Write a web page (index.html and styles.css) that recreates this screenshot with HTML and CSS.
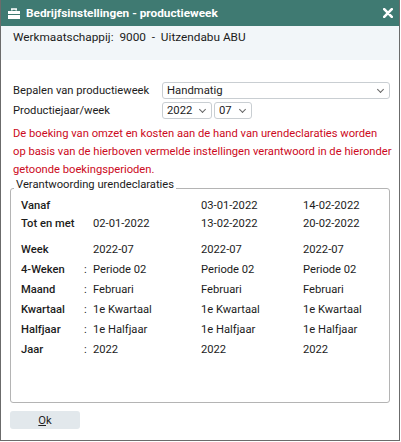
FILE: index.html
```html
<!DOCTYPE html>
<html lang="nl">
<head>
  <meta charset="UTF-8" />
  <title>Bedrijfsinstellingen - productieweek</title>
  <link rel="stylesheet" href="styles.css">
</head>
<body>
  <div class="dialog">
    <div class="titlebar">
      <svg class="title-icon" width="12" height="11" viewBox="0 0 12 11">
        <path d="M3.8 2.6V1h4.4v1.6" fill="none" stroke="#fff" stroke-width="1.5"/>
        <rect x="0" y="3" width="12" height="3" fill="#fff"/>
        <rect x="0" y="7" width="12" height="4" fill="#fff"/>
      </svg>
      <span class="title">Bedrijfsinstellingen - productieweek</span>
      <svg class="close" width="10" height="10" viewBox="0 0 10 10">
        <path d="M1.2 1.2L8.8 8.8M8.8 1.2L1.2 8.8" stroke="#fff" stroke-width="2.6" stroke-linecap="round"/>
      </svg>
    </div>

    <div class="header">Werkmaatschappij:&nbsp;&nbsp;9000&nbsp;&nbsp;-&nbsp;&nbsp;Uitzendabu ABU</div>

    <div class="content">
      <div class="form-row">
        <label>Bepalen van productieweek</label>
        <div class="select wide"><span>Handmatig</span><i class="chev"></i></div>
      </div>
      <div class="form-row">
        <label>Productiejaar/week</label>
        <div class="select year"><span>2022</span><i class="chev"></i></div>
        <div class="select week"><span>07</span><i class="chev"></i></div>
      </div>

      <p class="warning">De boeking van omzet en kosten aan de hand van urendeclaraties worden<br>op basis van de hierboven vermelde instellingen verantwoord in de hieronder<br>getoonde boekingsperioden.</p>

      <fieldset class="box">
        <legend>Verantwoording urendeclaraties</legend>
        <div class="grid">
          <div class="lbl">Vanaf</div><div></div><div></div><div>03-01-2022</div><div>14-02-2022</div>
          <div class="lbl">Tot en met</div><div></div><div>02-01-2022</div><div>13-02-2022</div><div>20-02-2022</div>
        </div>
        <div class="grid lower">
          <div class="lbl">Week</div><div></div><div>2022-07</div><div>2022-07</div><div>2022-07</div>
          <div class="lbl">4-Weken</div><div class="col">:</div><div>Periode 02</div><div>Periode 02</div><div>Periode 02</div>
          <div class="lbl">Maand</div><div class="col">:</div><div>Februari</div><div>Februari</div><div>Februari</div>
          <div class="lbl">Kwartaal</div><div class="col">:</div><div>1e Kwartaal</div><div>1e Kwartaal</div><div>1e Kwartaal</div>
          <div class="lbl">Halfjaar</div><div class="col">:</div><div>1e Halfjaar</div><div>1e Halfjaar</div><div>1e Halfjaar</div>
          <div class="lbl">Jaar</div><div class="col">:</div><div>2022</div><div>2022</div><div>2022</div>
        </div>
      </fieldset>

      <button class="ok"><u>O</u>k</button>
    </div>
  </div>
</body>
</html>
```

FILE: styles.css
```css
body {
  margin: 0;
  font-family: Roboto, "Liberation Sans", sans-serif;
  font-size: 11.2px;
  color: #1c1c1c;
  background: #fff;
}

.dialog {
  width: 400px;
  height: 441px;
  box-sizing: border-box;
  border: 1px solid #6b6b6b;
  border-top: none;
  background: #fff;
  display: flex;
  flex-direction: column;
}

.titlebar {
  height: 26px;
  flex: none;
  background: #3f7a72;
  color: #fff;
  display: flex;
  align-items: center;
  padding: 0 6px 0 7px;
}

.title-icon {
  margin-right: 6px;
}

.title {
  font-weight: bold;
  font-size: 11.8px;
  flex: 1;
}

.header {
  background: #f2f6f9;
  height: 34px;
  flex: none;
  padding: 1px 0 0 12px;
  box-sizing: border-box;
  line-height: 20px;
  font-size: 11.8px;
}

.content {
  padding: 22px 6px 0 12px;
  flex: 1;
}

.form-row {
  display: flex;
  align-items: center;
  margin-bottom: 3px;
}

.form-row label {
  width: 149px;
}

.select {
  height: 17px;
  border: 1px solid #c9ced2;
  border-radius: 3px;
  display: flex;
  align-items: center;
  padding: 0 6px 0 4px;
  box-sizing: border-box;
  margin-right: 2px;
  font-size: 11.3px;
}

.select span {
  flex: 1;
}

.select.wide {
  width: 228px;
  margin-right: 0;
}

.select.year {
  width: 50px;
}

.select.week {
  width: 38px;
}

.chev {
  width: 4px;
  height: 4px;
  border-right: 1px solid #666;
  border-bottom: 1px solid #666;
  transform: rotate(45deg);
  margin-top: -3px;
}

.warning {
  color: #cc0a22;
  margin: 6px 0 0 0;
  line-height: 18px;
  white-space: nowrap;
}

.box {
  margin: -1px 0 0 -3px;
  width: 380px;
  height: 225px;
  box-sizing: border-box;
  border: 1px solid #b4b4b4;
  border-radius: 3px;
  padding: 0 8px 0 10px;
}

.box legend {
  padding: 0 2px 6px;
  margin-left: -7px;
  line-height: 14px;
}

.grid {
  display: grid;
  grid-template-columns: 63px 9px 108px 102px auto;
  grid-auto-rows: 18px;
  align-items: center;
  margin-top: -2px;
}

.grid.lower {
  margin-top: 7px;
  grid-auto-rows: 20px;
}

.lbl {
  font-weight: 500;
}

.ok {
  margin: 8px 0 0 -3px;
  width: 70px;
  height: 18px;
  border: none;
  border-radius: 3px;
  background: #e2e8ec;
  font-family: Roboto, "Liberation Sans", sans-serif;
  font-size: 11.2px;
  color: #222;
  padding: 0;
}
```
